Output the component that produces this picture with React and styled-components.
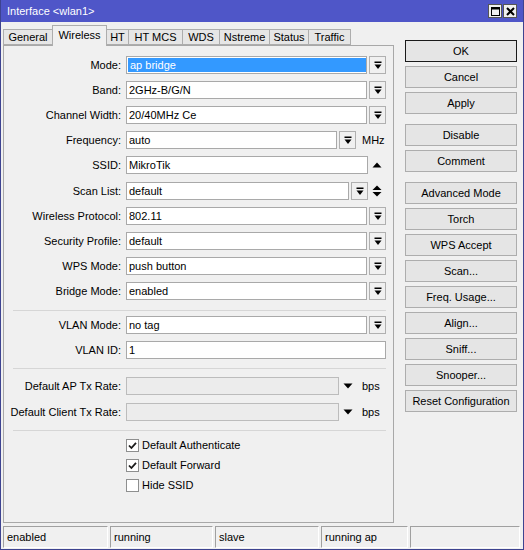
import React from 'react';
import styled, { createGlobalStyle } from 'styled-components';

const Global = createGlobalStyle`
  html, body { margin: 0; padding: 0; background: #f0f0f0; }
  body { font-family: "Liberation Sans", Arial, sans-serif; font-size: 11px; color: #000; }
  * { box-sizing: border-box; }
`;

const Window = styled.div`
  width: 524px;
  height: 550px;
  display: flex;
  flex-direction: column;
  background: #f0f0f0;
  border: 1px solid #3d4390;
  border-top: none;
  overflow: hidden;
`;

const TitleBar = styled.div`
  height: 22px;
  flex: none;
  display: flex;
  align-items: center;
  padding: 0 6px;
  background: #4f56c8;
  color: #fff;
  font-size: 11px;
`;

const TitleButtons = styled.div`
  margin-left: auto;
  display: flex;
  gap: 1px;
`;

const TitleButton = styled.div`
  width: 14px;
  height: 14px;
  background: #f0f0f0;
  border: 1px solid #555;
  display: flex;
  align-items: center;
  justify-content: center;
`;

const Body = styled.div`
  flex: 1;
  display: flex;
  padding-left: 2px;
  min-height: 0;
`;

const LeftCol = styled.div`
  width: 391px;
  display: flex;
  flex-direction: column;
  padding-bottom: 3px;
`;

const TabsRow = styled.div`
  height: 23px;
  flex: none;
  display: flex;
  align-items: flex-end;
`;

const Tab = styled.div`
  position: relative;
  width: ${p => p.$w}px;
  height: ${p => (p.$active ? 21 : 16)}px;
  margin-right: -1px;
  margin-bottom: ${p => (p.$active ? -1 : 0)}px;
  z-index: ${p => (p.$active ? 2 : 1)};
  border: 1px solid #adadad;
  border-bottom: ${p => (p.$active ? 'none' : '1px solid #adadad')};
  background: ${p => (p.$active ? '#f0f0f0' : '#e6e6e6')};
  display: flex;
  align-items: ${p => (p.$active ? 'flex-start' : 'center')};
  padding-top: ${p => (p.$active ? 3 : 0)}px;
  justify-content: center;
  white-space: nowrap;
`;

const Panel = styled.div`
  flex: 1;
  border: 1px solid #a8a8a8;
  background: #f0f0f0;
  padding: 10px 7px 0 0;
  display: flex;
  flex-direction: column;
`;

const FormRow = styled.div`
  display: grid;
  grid-template-columns: 117px 1fr;
  column-gap: 5px;
  align-items: center;
  height: ${p => p.$h || 18}px;
  margin-top: ${p => p.$mt || 0}px;
`;

const Label = styled.div`
  text-align: right;
  white-space: nowrap;
`;

const Field = styled.div`
  display: flex;
  align-items: center;
  height: 18px;
`;

const Input = styled.div`
  flex: 1;
  min-width: 0;
  height: 18px;
  border: 1px solid ${p => (p.$disabled ? '#bcbcbc' : '#a9a9a9')};
  background: ${p => (p.$disabled ? '#ececec' : '#fff')};
  display: flex;
  align-items: center;
  padding-left: 2px;
  white-space: nowrap;
`;

const Selected = styled.span`
  display: flex;
  align-items: center;
  align-self: stretch;
  flex: 1;
  margin: 1px 0 1px -1px;
  padding-left: 2px;
  background: #3399ff;
  color: #fff;
`;

const DropButton = styled.div`
  width: 17px;
  height: 18px;
  margin-left: 2px;
  flex: none;
  border: 1px solid #b0b0b0;
  background: #f0f0f0;
  display: flex;
  align-items: center;
  justify-content: center;
`;

const Trailer = styled.div`
  width: ${p => p.$w || 18}px;
  flex: none;
  display: flex;
  align-items: center;
  justify-content: center;
`;

const Unit = styled.div`
  width: 30px;
  flex: none;
  padding-left: 6px;
`;

const Separator = styled.div`
  height: 1px;
  margin: ${p => p.$mt}px 0 0 9px;
  background: #d6d6d6;
  flex: none;
`;

const CheckRow = styled.div`
  display: flex;
  align-items: center;
  gap: 3px;
`;

const Box = styled.div`
  width: 13px;
  height: 13px;
  border: 1px solid #8e8f8f;
  background: #fff;
  display: flex;
  align-items: center;
  justify-content: center;
`;

const RightCol = styled.div`
  width: 112px;
  margin-left: 11px;
  padding-top: 18px;
  display: flex;
  flex-direction: column;
`;

const Button = styled.div`
  height: 22px;
  margin-top: ${p => p.$mt}px;
  border: 1px solid ${p => (p.$default ? '#1a1a1a' : '#adadad')};
  background: #e5e5e5;
  display: flex;
  align-items: center;
  justify-content: center;
  white-space: nowrap;
  flex: none;
`;

const StatusBar = styled.div`
  height: 22px;
  flex: none;
  margin: 0 3px 1px 2px;
  display: grid;
  grid-template-columns: 105px 103px 104px 87px 1fr;
  column-gap: 2px;
`;

const StatusCell = styled.div`
  border: 1px solid #fff;
  border-top-color: #a0a0a0;
  border-left-color: #a0a0a0;
  display: flex;
  align-items: center;
  padding-left: 3px;
  white-space: nowrap;
`;

const DropIcon = () => (
  <svg width="8" height="9" viewBox="0 0 8 9">
    <rect x="0.5" y="0.5" width="7" height="1.5" fill="#000" />
    <polygon points="0.5,3.5 7.5,3.5 4,8" fill="#000" />
  </svg>
);

const UpTri = () => (
  <svg width="10" height="6" viewBox="0 0 10 6">
    <polygon points="0.5,5.5 9.5,5.5 5,0.5" fill="#000" />
  </svg>
);

const DownTri = () => (
  <svg width="10" height="6" viewBox="0 0 10 6">
    <polygon points="0.5,0.5 9.5,0.5 5,5.5" fill="#000" />
  </svg>
);

const UpDown = () => (
  <svg width="10" height="12" viewBox="0 0 10 12">
    <polygon points="0.5,5 9.5,5 5,0.5" fill="#000" />
    <polygon points="0.5,7 9.5,7 5,11.5" fill="#000" />
  </svg>
);

const Check = () => (
  <svg width="9" height="9" viewBox="0 0 9 9">
    <path d="M1 4.5 L3.4 7 L8 1.8" stroke="#1a1a1a" strokeWidth="1.8" fill="none" />
  </svg>
);

const tabs = [
  ['General', 50], ['Wireless', 55, true], ['HT', 23], ['HT MCS', 55],
  ['WDS', 38], ['Nstreme', 51], ['Status', 40], ['Traffic', 43],
];

const buttons = [
  ['OK', 0, true], ['Cancel', 4], ['Apply', 4],
  ['Disable', 10], ['Comment', 4],
  ['Advanced Mode', 10], ['Torch', 4], ['WPS Accept', 4], ['Scan...', 4],
  ['Freq. Usage...', 4], ['Align...', 4], ['Sniff...', 4], ['Snooper...', 4],
  ['Reset Configuration', 4],
];

const mainRows = [
  { label: 'Mode:', value: 'ap bridge', kind: 'drop', selected: true, mt: 0 },
  { label: 'Band:', value: '2GHz-B/G/N', kind: 'drop', mt: 7 },
  { label: 'Channel Width:', value: '20/40MHz Ce', kind: 'drop', mt: 7 },
  { label: 'Frequency:', value: 'auto', kind: 'dropUnit', unit: 'MHz', mt: 7 },
  { label: 'SSID:', value: 'MikroTik', kind: 'up', mt: 7 },
  { label: 'Scan List:', value: 'default', kind: 'dropUpDown', mt: 8 },
  { label: 'Wireless Protocol:', value: '802.11', kind: 'drop', mt: 7 },
  { label: 'Security Profile:', value: 'default', kind: 'drop', mt: 7 },
  { label: 'WPS Mode:', value: 'push button', kind: 'drop', mt: 7 },
  { label: 'Bridge Mode:', value: 'enabled', kind: 'drop', mt: 7 },
];

const FieldFor = ({ row }) => (
  <Field>
    <Input $disabled={row.kind === 'rate'}>
      {row.selected ? <Selected>{row.value}</Selected> : row.value}
    </Input>
    {(row.kind === 'drop' || row.kind === 'dropUnit' || row.kind === 'dropUpDown') && (
      <DropButton><DropIcon /></DropButton>
    )}
    {row.kind === 'up' && <Trailer><UpTri /></Trailer>}
    {row.kind === 'dropUpDown' && <Trailer><UpDown /></Trailer>}
    {row.kind === 'rate' && <Trailer $w={17}><DownTri /></Trailer>}
    {row.unit && <Unit>{row.unit}</Unit>}
  </Field>
);

const statuses = ['enabled', 'running', 'slave', 'running ap', ''];

export default function App() {
  return (
    <>
      <Global />
      <Window>
        <TitleBar>
          <span>Interface &lt;wlan1&gt;</span>
          <TitleButtons>
            <TitleButton>
              <svg width="9" height="9" viewBox="0 0 9 9">
                <rect x="0.5" y="0.5" width="8" height="8" fill="none" stroke="#000" />
                <rect x="0.5" y="0.5" width="8" height="2" fill="#000" />
              </svg>
            </TitleButton>
            <TitleButton>
              <svg width="9" height="9" viewBox="0 0 9 9">
                <path d="M1 1 L8 8 M8 1 L1 8" stroke="#000" strokeWidth="2" />
              </svg>
            </TitleButton>
          </TitleButtons>
        </TitleBar>
        <Body>
          <LeftCol>
            <TabsRow>
              {tabs.map(([name, w, active]) => (
                <Tab key={name} $w={w} $active={active}>{name}</Tab>
              ))}
            </TabsRow>
            <Panel>
              {mainRows.map(row => (
                <FormRow key={row.label} $mt={row.mt}>
                  <Label>{row.label}</Label>
                  <FieldFor row={row} />
                </FormRow>
              ))}
              <Separator $mt={10} />
              <FormRow $mt={5}>
                <Label>VLAN Mode:</Label>
                <FieldFor row={{ value: 'no tag', kind: 'drop' }} />
              </FormRow>
              <FormRow $mt={7}>
                <Label>VLAN ID:</Label>
                <FieldFor row={{ value: '1', kind: 'plain' }} />
              </FormRow>
              <Separator $mt={9} />
              <FormRow $mt={8}>
                <Label>Default AP Tx Rate:</Label>
                <FieldFor row={{ value: '', kind: 'rate', unit: 'bps' }} />
              </FormRow>
              <FormRow $mt={8}>
                <Label>Default Client Tx Rate:</Label>
                <FieldFor row={{ value: '', kind: 'rate', unit: 'bps' }} />
              </FormRow>
              <Separator $mt={9} />
              {[['Default Authenticate', true], ['Default Forward', true], ['Hide SSID', false]].map(([t, c], i) => (
                <FormRow key={t} $h={20} $mt={i === 0 ? 4 : 0}>
                  <span />
                  <CheckRow>
                    <Box>{c && <Check />}</Box>
                    <span>{t}</span>
                  </CheckRow>
                </FormRow>
              ))}
            </Panel>
          </LeftCol>
          <RightCol>
            {buttons.map(([t, mt, d]) => (
              <Button key={t} $mt={mt} $default={d}>{t}</Button>
            ))}
          </RightCol>
        </Body>
        <StatusBar>
          {statuses.map((s, i) => (
            <StatusCell key={i}>{s}</StatusCell>
          ))}
        </StatusBar>
      </Window>
    </>
  );
}
